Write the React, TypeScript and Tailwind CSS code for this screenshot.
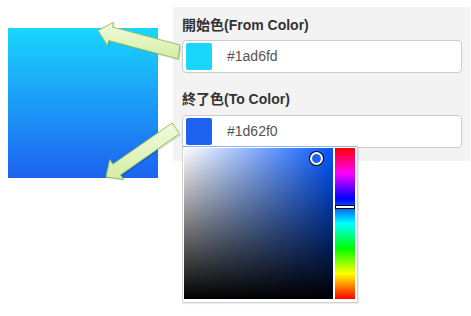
import React from "react";

const font = '"Liberation Sans", "Noto Sans CJK TC", Arial, sans-serif';

function Arrow({ pts }: { pts: string }) {
  return (
    <g>
      <polygon points={pts} fill="#000" opacity="0.12" transform="translate(1.5 1.5)" />
      <polygon points={pts} fill="url(#ag)" stroke="#9cc263" strokeWidth="1" strokeLinejoin="round" />
    </g>
  );
}

function ColorInput({ color, text }: { color: string; text: string }) {
  return (
    <div className="flex h-[33px] w-[280px] items-center rounded-[4px] border border-[#cccccc] bg-white pl-[3px]">
      <div className="h-[27px] w-[26px] rounded-[2px]" style={{ background: color }} />
      <span className="ml-[15px] text-[14px] text-[#555555]" style={{ fontFamily: font }}>{text}</span>
    </div>
  );
}

export default function App() {
  return (
    <div className="relative h-[316px] w-[471px] bg-white" style={{ fontFamily: font }}>
      <div className="flex items-start">
        <div className="ml-[8px] mt-[28px] h-[150px] w-[150px] bg-[linear-gradient(to_bottom,#1ad6fd,#1d62f0)]" />
        <div className="ml-[15px] mt-[7px] h-[154px] w-[297px] bg-[#f3f3f3] pl-[9px] pt-[8px]">
          <div className="h-[20px] text-[14px] font-bold leading-[20px] text-[#333333]">開始色(From Color)</div>
          <div className="mt-[5px]">
            <ColorInput color="#1ad6fd" text="#1ad6fd" />
          </div>
          <div className="mt-[16px] h-[20px] text-[14px] font-bold leading-[20px] text-[#333333]">終了色(To Color)</div>
          <div className="relative mt-[6px]">
            <ColorInput color="#1d62f0" text="#1d62f0" />
            <div className="absolute left-0 top-[31px] z-10 flex h-[157px] w-[176px] gap-[2px] border border-[#d4d4d4] border-t-[#8fb6e6] bg-white p-[1px] shadow-[1px_1px_1px_rgba(0,0,0,0.08)]">
              <div className="relative h-[151px] w-[149px] bg-[#0055ff]">
                <div className="absolute inset-0 bg-[linear-gradient(to_right,#ffffff,rgba(255,255,255,0))]" />
                <div className="absolute inset-0 bg-[linear-gradient(to_bottom,rgba(0,0,0,0),#000000)]" />
                <div className="absolute left-[126px] top-[4px] h-[13px] w-[13px] rounded-full border-[2px] border-white bg-[#1d62f0] shadow-[0_0_0_1px_#000000]" />
              </div>
              <div className="relative h-[151px] w-[20px] bg-[linear-gradient(to_bottom,#ff0000,#ff00ff,#0000ff,#00ffff,#00ff00,#ffff00,#ff0000)]">
                <div className="absolute left-0 top-[57px] h-[4px] w-[20px] border border-black bg-white" />
              </div>
            </div>
          </div>
        </div>
      </div>
      <svg className="pointer-events-none absolute left-0 top-0 z-20" width="471" height="316">
        <defs>
          <linearGradient id="ag" x1="0" y1="0" x2="0" y2="1">
            <stop offset="0" stopColor="#f2fbe0" />
            <stop offset="1" stopColor="#d3eea3" />
          </linearGradient>
        </defs>
        <Arrow pts="180,45 112.4,27 113.7,22.2 98,30.5 107.5,45.4 108.8,40.6 178,58.9" />
        <Arrow pts="172.1,123 112.9,164.2 109.8,159.7 106,177 123.5,179.4 120.4,174.9 179.5,133.7" />
      </svg>
    </div>
  );
}
